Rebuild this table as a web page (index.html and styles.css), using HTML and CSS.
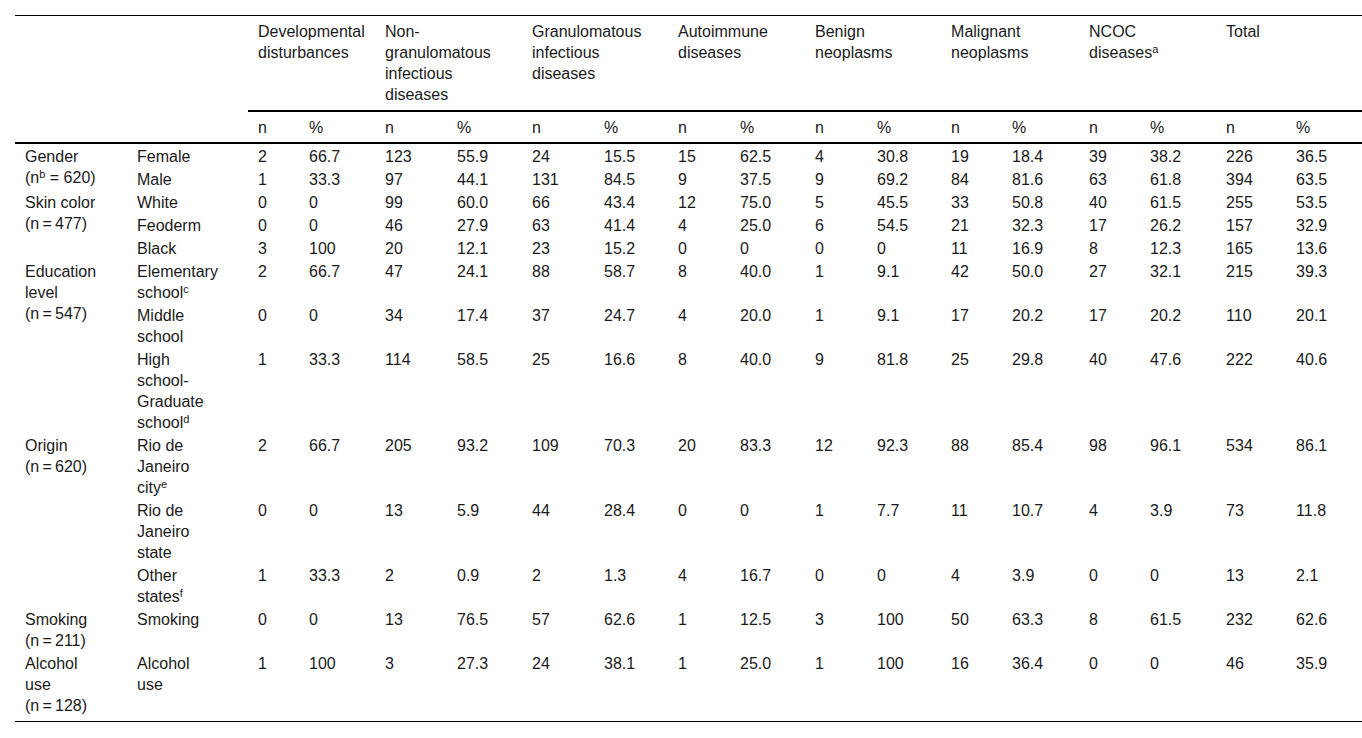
FILE: index.html
```html
<!DOCTYPE html>
<html lang="en">
<head>
<meta charset="utf-8">
<title>Table</title>
<link rel="stylesheet" href="styles.css">
</head>
<body>
<table class="data">
  <colgroup>
    <col class="w112"><col class="w121">
    <col class="w51"><col class="w76">
    <col class="w72"><col class="w75">
    <col class="w72"><col class="w74">
    <col class="w62"><col class="w75">
    <col class="w62"><col class="w74">
    <col class="w61"><col class="w77">
    <col class="w61"><col class="w76">
    <col class="w70"><col class="w76">
  </colgroup>
  <thead>
    <tr class="groups">
      <th rowspan="2" class="stub"></th>
      <th rowspan="2" class="stub"></th>
      <th colspan="2">Developmental disturbances</th>
      <th colspan="2">Non-granulomatous infectious diseases</th>
      <th colspan="2">Granulomatous infectious diseases</th>
      <th colspan="2">Autoimmune diseases</th>
      <th colspan="2">Benign neoplasms</th>
      <th colspan="2">Malignant neoplasms</th>
      <th colspan="2">NCOC diseases<sup>a</sup></th>
      <th colspan="2">Total</th>
    </tr>
    <tr class="units">
      <th>n</th><th>%</th><th>n</th><th>%</th><th>n</th><th>%</th><th>n</th><th>%</th>
      <th>n</th><th>%</th><th>n</th><th>%</th><th>n</th><th>%</th><th>n</th><th>%</th>
    </tr>
  </thead>
  <tbody>
    <tr>
      <td rowspan="2">Gender <span class="count">(n<sup>b</sup> = 620)</span></td>
      <td>Female</td>
      <td>2</td><td>66.7</td><td>123</td><td>55.9</td><td>24</td><td>15.5</td><td>15</td><td>62.5</td><td>4</td><td>30.8</td><td>19</td><td>18.4</td><td>39</td><td>38.2</td><td>226</td><td>36.5</td>
    </tr>
    <tr>
      <td>Male</td>
      <td>1</td><td>33.3</td><td>97</td><td>44.1</td><td>131</td><td>84.5</td><td>9</td><td>37.5</td><td>9</td><td>69.2</td><td>84</td><td>81.6</td><td>63</td><td>61.8</td><td>394</td><td>63.5</td>
    </tr>
    <tr>
      <td rowspan="3">Skin color <span class="count">(n&#8201;=&#8201;477)</span></td>
      <td>White</td>
      <td>0</td><td>0</td><td>99</td><td>60.0</td><td>66</td><td>43.4</td><td>12</td><td>75.0</td><td>5</td><td>45.5</td><td>33</td><td>50.8</td><td>40</td><td>61.5</td><td>255</td><td>53.5</td>
    </tr>
    <tr>
      <td>Feoderm</td>
      <td>0</td><td>0</td><td>46</td><td>27.9</td><td>63</td><td>41.4</td><td>4</td><td>25.0</td><td>6</td><td>54.5</td><td>21</td><td>32.3</td><td>17</td><td>26.2</td><td>157</td><td>32.9</td>
    </tr>
    <tr>
      <td>Black</td>
      <td>3</td><td>100</td><td>20</td><td>12.1</td><td>23</td><td>15.2</td><td>0</td><td>0</td><td>0</td><td>0</td><td>11</td><td>16.9</td><td>8</td><td>12.3</td><td>165</td><td>13.6</td>
    </tr>
    <tr>
      <td rowspan="3">Education level <span class="count">(n&#8201;=&#8201;547)</span></td>
      <td>Elementary school<sup>c</sup></td>
      <td>2</td><td>66.7</td><td>47</td><td>24.1</td><td>88</td><td>58.7</td><td>8</td><td>40.0</td><td>1</td><td>9.1</td><td>42</td><td>50.0</td><td>27</td><td>32.1</td><td>215</td><td>39.3</td>
    </tr>
    <tr>
      <td>Middle school</td>
      <td>0</td><td>0</td><td>34</td><td>17.4</td><td>37</td><td>24.7</td><td>4</td><td>20.0</td><td>1</td><td>9.1</td><td>17</td><td>20.2</td><td>17</td><td>20.2</td><td>110</td><td>20.1</td>
    </tr>
    <tr>
      <td>High school-Graduate school<sup>d</sup></td>
      <td>1</td><td>33.3</td><td>114</td><td>58.5</td><td>25</td><td>16.6</td><td>8</td><td>40.0</td><td>9</td><td>81.8</td><td>25</td><td>29.8</td><td>40</td><td>47.6</td><td>222</td><td>40.6</td>
    </tr>
    <tr>
      <td rowspan="3">Origin <span class="count">(n&#8201;=&#8201;620)</span></td>
      <td>Rio de Janeiro city<sup>e</sup></td>
      <td>2</td><td>66.7</td><td>205</td><td>93.2</td><td>109</td><td>70.3</td><td>20</td><td>83.3</td><td>12</td><td>92.3</td><td>88</td><td>85.4</td><td>98</td><td>96.1</td><td>534</td><td>86.1</td>
    </tr>
    <tr>
      <td>Rio de Janeiro state</td>
      <td>0</td><td>0</td><td>13</td><td>5.9</td><td>44</td><td>28.4</td><td>0</td><td>0</td><td>1</td><td>7.7</td><td>11</td><td>10.7</td><td>4</td><td>3.9</td><td>73</td><td>11.8</td>
    </tr>
    <tr>
      <td>Other states<sup>f</sup></td>
      <td>1</td><td>33.3</td><td>2</td><td>0.9</td><td>2</td><td>1.3</td><td>4</td><td>16.7</td><td>0</td><td>0</td><td>4</td><td>3.9</td><td>0</td><td>0</td><td>13</td><td>2.1</td>
    </tr>
    <tr>
      <td>Smoking <span class="count">(n&#8201;=&#8201;211)</span></td>
      <td>Smoking</td>
      <td>0</td><td>0</td><td>13</td><td>76.5</td><td>57</td><td>62.6</td><td>1</td><td>12.5</td><td>3</td><td>100</td><td>50</td><td>63.3</td><td>8</td><td>61.5</td><td>232</td><td>62.6</td>
    </tr>
    <tr class="last">
      <td>Alcohol use <span class="count">(n&#8201;=&#8201;128)</span></td>
      <td>Alcohol use</td>
      <td>1</td><td>100</td><td>3</td><td>27.3</td><td>24</td><td>38.1</td><td>1</td><td>25.0</td><td>1</td><td>100</td><td>16</td><td>36.4</td><td>0</td><td>0</td><td>46</td><td>35.9</td>
    </tr>
  </tbody>
</table>
</body>
</html>
```

FILE: styles.css
```css
html, body {
  margin: 0;
  padding: 0;
  background: #ffffff;
}

body {
  padding: 15px 0 0 15px;
  font-family: "Liberation Sans", Arial, sans-serif;
  font-size: 16px;
  line-height: 21px;
  color: #1a1a1a;
}

.data {
  border-collapse: collapse;
  table-layout: fixed;
  width: 1347px;
  border-top: 1px solid #000;
}

.w112 { width: 112px; }
.w121 { width: 121px; }
.w51 { width: 51px; }
.w61 { width: 61px; }
.w62 { width: 62px; }
.w70 { width: 70px; }
.w72 { width: 72px; }
.w74 { width: 74px; }
.w75 { width: 75px; }
.w76 { width: 76px; }
.w77 { width: 77px; }

.data th,
.data td {
  text-align: left;
  vertical-align: top;
  font-weight: normal;
  padding: 2px 29px 0 10px;
}

.data .groups th {
  padding-top: 5px;
  padding-bottom: 5px;
  border-bottom: 2px solid #000;
}

.data .units th {
  padding-top: 5px;
  padding-bottom: 4px;
  border-bottom: 2px solid #000;
}

.data .groups th.stub {
  border-bottom: 2px solid #000;
}

.data tr.last td {
  padding-bottom: 5px;
  border-bottom: 1px solid #000;
}

.count {
  display: block;
  white-space: nowrap;
}

sup {
  font-size: 11px;
  line-height: 0;
  vertical-align: 5px;
}
```
